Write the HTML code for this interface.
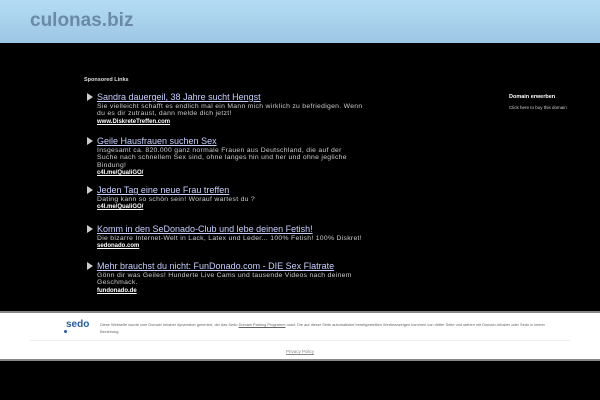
<!DOCTYPE html>
<html><head><meta charset="utf-8"><style>
*{margin:0;padding:0}
body{width:600px;height:400px;background:#000;font-family:"Liberation Sans",sans-serif;position:relative;overflow:hidden}
.hd{position:absolute;left:0;top:0;width:600px;height:43px;background:linear-gradient(#b4dcf4,#9cc6e4)}
.hd span{position:absolute;left:30px;top:10px;font-size:19px;font-weight:bold;color:#6a8aa8}
.a{position:absolute;color:#fff}
.sp{left:84px;top:77px;font-size:5.5px;font-weight:bold;color:#ddd}
.ad{position:absolute;left:97px;width:330px}
.t{font-size:9px;color:#c8d0ff;text-decoration:underline;line-height:10px;display:block;white-space:nowrap}
.d{font-size:6.8px;letter-spacing:0.3px;color:#ccc;line-height:7.5px;margin-top:0.5px;white-space:nowrap}
.u{font-size:6px;color:#fff;font-weight:bold;text-decoration:underline;line-height:8px}
.ar{position:absolute;left:-10px;top:1px;width:0;height:0;border-left:6px solid #ccc;border-top:4px solid transparent;border-bottom:4px solid transparent}
.ft{position:absolute;left:0;top:311px;width:600px;height:50px;background:#fff;border-top:2px solid #888;border-bottom:2px solid #888;box-sizing:border-box}
</style></head><body>
<div class="hd"><span>culonas.biz</span></div>
<div class="a sp">Sponsored Links</div>
<div class="ad" style="top:92px"><i class="ar"></i><span class="t">Sandra dauergeil, 38 Jahre sucht Hengst</span><div class="d">Sie vielleicht schafft es endlich mal ein Mann mich wirklich zu befriedigen. Wenn<br>du es dir zutraust, dann melde dich jetzt!</div><div class="u">www.DiskreteTreffen.com</div></div>
<div class="ad" style="top:136px"><i class="ar"></i><span class="t">Geile Hausfrauen suchen Sex</span><div class="d">Insgesamt ca. 820.000 ganz normale Frauen aus Deutschland, die auf der<br>Suche nach schnellem Sex sind, ohne langes hin und her und ohne jegliche<br>Bindung!</div><div class="u">c4l.me/QualiGO/</div></div>
<div class="ad" style="top:185px"><i class="ar"></i><span class="t">Jeden Tag eine neue Frau treffen</span><div class="d">Dating kann so schön sein! Worauf wartest du ?</div><div class="u">c4l.me/QualiGO/</div></div>
<div class="ad" style="top:224px"><i class="ar"></i><span class="t">Komm in den SeDonado-Club und lebe deinen Fetish!</span><div class="d">Die bizarre Internet-Welt in Lack, Latex und Leder... 100% Fetish! 100% Diskret!</div><div class="u">sedonado.com</div></div>
<div class="ad" style="top:261px"><i class="ar"></i><span class="t">Mehr brauchst du nicht: FunDonado.com - DIE Sex Flatrate</span><div class="d">Gönn dir was Geiles! Hunderte Live Cams und tausende Videos nach deinem<br>Geschmack.</div><div class="u">fundonado.de</div></div>
<div class="a" style="left:509px;top:94px;font-size:5.5px;font-weight:bold">Domain erwerben</div>
<div class="a" style="left:509px;top:105px;font-size:4.5px;color:#ccc">Click here to buy this domain</div>
<div class="ft">
<div style="position:absolute;left:66px;top:6px;font-size:10px;font-weight:bold;color:#2a5aa0">sedo</div>
<div style="position:absolute;left:64px;top:17px;width:3px;height:3px;background:#2a5aa0;border-radius:50%"></div>
<div style="position:absolute;left:100px;top:8px;width:445px;font-size:3.9px;line-height:7px;color:#666">Diese Webseite wurde vom Domain Inhaber dynamisch generiert, der das Sedo <u>Domain Parking Programm</u> nutzt. Die auf dieser Seite automatisiert bereitgestellten Werbeanzeigen kommen von dritter Seite und stehen mit Domain-Inhaber oder Sedo in keiner Beziehung.</div>
<div style="position:absolute;left:30px;top:27px;width:540px;height:1px;background:#eee"></div>
<div style="position:absolute;left:0;width:600px;top:36px;text-align:center;font-size:4.5px;color:#888;text-decoration:underline">Privacy Policy</div>
</div>
</body></html>
